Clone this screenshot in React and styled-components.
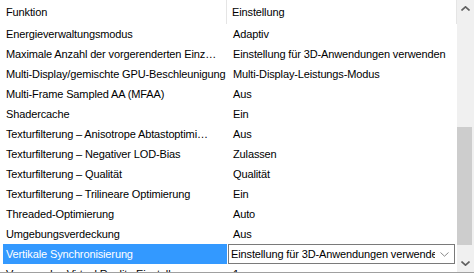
import React from 'react';
import styled, { createGlobalStyle } from 'styled-components';

const GlobalStyle = createGlobalStyle`
  html, body {
    margin: 0;
    padding: 0;
    background: #ffffff;
  }
  body {
    font-family: Tahoma, "Liberation Sans", "DejaVu Sans", sans-serif;
    font-size: 11px;
    letter-spacing: -0.13px;
    color: #000000;
  }
`;

const Frame = styled.div`
  width: 474px;
  height: 278px;
  background: #ffffff;
  overflow: hidden;
`;

const ListView = styled.div`
  display: flex;
  height: 272px;
  border-bottom: 1px solid #a0a0a0;
  overflow: hidden;
`;

const Table = styled.div`
  flex: 1;
  min-width: 0;
  display: flex;
  flex-direction: column;
  overflow: hidden;
`;

const HeaderRow = styled.div`
  display: flex;
  height: 24px;
  flex-shrink: 0;
  align-items: center;
`;

const HeaderCell = styled.div`
  width: ${(p) => (p.$first ? '227px' : 'auto')};
  flex: ${(p) => (p.$first ? 'none' : '1')};
  height: 100%;
  display: flex;
  align-items: center;
  padding-left: ${(p) => (p.$first ? '6px' : '5px')};
  box-sizing: border-box;
  border-right: 1px solid #e5e5e5;
`;

const Row = styled.div`
  display: flex;
  height: 20px;
  flex-shrink: 0;
  align-items: center;
`;

const NameCell = styled.div`
  width: 224px;
  flex-shrink: 0;
  margin-left: 3px;
  height: 100%;
  padding-left: 3px;
  box-sizing: border-box;
  display: flex;
  align-items: center;
  white-space: nowrap;
  overflow: hidden;
  background: ${(p) => (p.$selected ? '#3399ff' : 'transparent')};
  color: ${(p) => (p.$selected ? '#ffffff' : '#000000')};
`;

const ValueCell = styled.div`
  flex: 1;
  min-width: 0;
  height: 100%;
  padding-left: 6px;
  display: flex;
  align-items: center;
  white-space: nowrap;
  overflow: hidden;
`;

const Select = styled.div`
  flex: 1;
  min-width: 0;
  margin-left: 1px;
  margin-right: 2px;
  height: 20px;
  box-sizing: border-box;
  border: 1px solid #7a7a7a;
  display: flex;
  align-items: center;
  padding-left: 2px;
  background: #ffffff;
`;

const SelectText = styled.span`
  flex: 1;
  min-width: 0;
  overflow: hidden;
  white-space: nowrap;
`;

const SelectArrow = styled.span`
  width: 19px;
  display: flex;
  justify-content: center;
  align-items: center;
  flex-shrink: 0;
`;

const Scrollbar = styled.div`
  width: 17px;
  flex-shrink: 0;
  background: #f0f0f0;
  display: flex;
  flex-direction: column;
  align-items: center;
`;

const ArrowButton = styled.div`
  width: 17px;
  height: 17px;
  flex-shrink: 0;
  display: flex;
  align-items: center;
  justify-content: center;
`;

const Track = styled.div`
  flex: 1;
  width: 100%;
  display: flex;
  flex-direction: column;
`;

const Thumb = styled.div`
  margin-top: ${(p) => p.$top}px;
  height: ${(p) => p.$size}px;
  width: 15px;
  background: #cdcdcd;
`;

const Chevron = ({ up, color = '#606060', w = 9, h = 5, sw = 1.6 }) => (
  <svg width={w} height={h} viewBox={`0 0 ${w} ${h}`}>
    <polyline
      points={up ? `0.5,${h - 0.5} ${w / 2},0.8 ${w - 0.5},${h - 0.5}` : `0.5,0.5 ${w / 2},${h - 0.8} ${w - 0.5},0.5`}
      fill="none"
      stroke={color}
      strokeWidth={sw}
    />
  </svg>
);

const rows = [
  ['Energieverwaltungsmodus', 'Adaptiv'],
  ['Maximale Anzahl der vorgerenderten Einz…', 'Einstellung für 3D-Anwendungen verwenden'],
  ['Multi-Display/gemischte GPU-Beschleunigung', 'Multi-Display-Leistungs-Modus'],
  ['Multi-Frame Sampled AA (MFAA)', 'Aus'],
  ['Shadercache', 'Ein'],
  ['Texturfilterung – Anisotrope Abtastoptimi…', 'Aus'],
  ['Texturfilterung – Negativer LOD-Bias', 'Zulassen'],
  ['Texturfilterung – Qualität', 'Qualität'],
  ['Texturfilterung – Trilineare Optimierung', 'Ein'],
  ['Threaded-Optimierung', 'Auto'],
  ['Umgebungsverdeckung', 'Aus'],
];

export default function App() {
  return (
    <Frame>
      <GlobalStyle />
      <ListView>
        <Table>
          <HeaderRow>
            <HeaderCell $first>Funktion</HeaderCell>
            <HeaderCell>Einstellung</HeaderCell>
          </HeaderRow>
          {rows.map(([name, value]) => (
            <Row key={name}>
              <NameCell>{name}</NameCell>
              <ValueCell>{value}</ValueCell>
            </Row>
          ))}
          <Row>
            <NameCell $selected>Vertikale Synchronisierung</NameCell>
            <Select>
              <SelectText>Einstellung für 3D-Anwendungen verwenden</SelectText>
              <SelectArrow>
                <Chevron color="#8a8a8a" w={9} h={5} sw={1} />
              </SelectArrow>
            </Select>
          </Row>
          <Row>
            <NameCell>Vorrang des Virtual Reality-Einstellungs…</NameCell>
            <ValueCell>1</ValueCell>
          </Row>
        </Table>
        <Scrollbar>
          <ArrowButton>
            <Chevron up />
          </ArrowButton>
          <Track>
            <Thumb $top={110} $size={118} />
          </Track>
          <ArrowButton>
            <Chevron />
          </ArrowButton>
        </Scrollbar>
      </ListView>
    </Frame>
  );
}
